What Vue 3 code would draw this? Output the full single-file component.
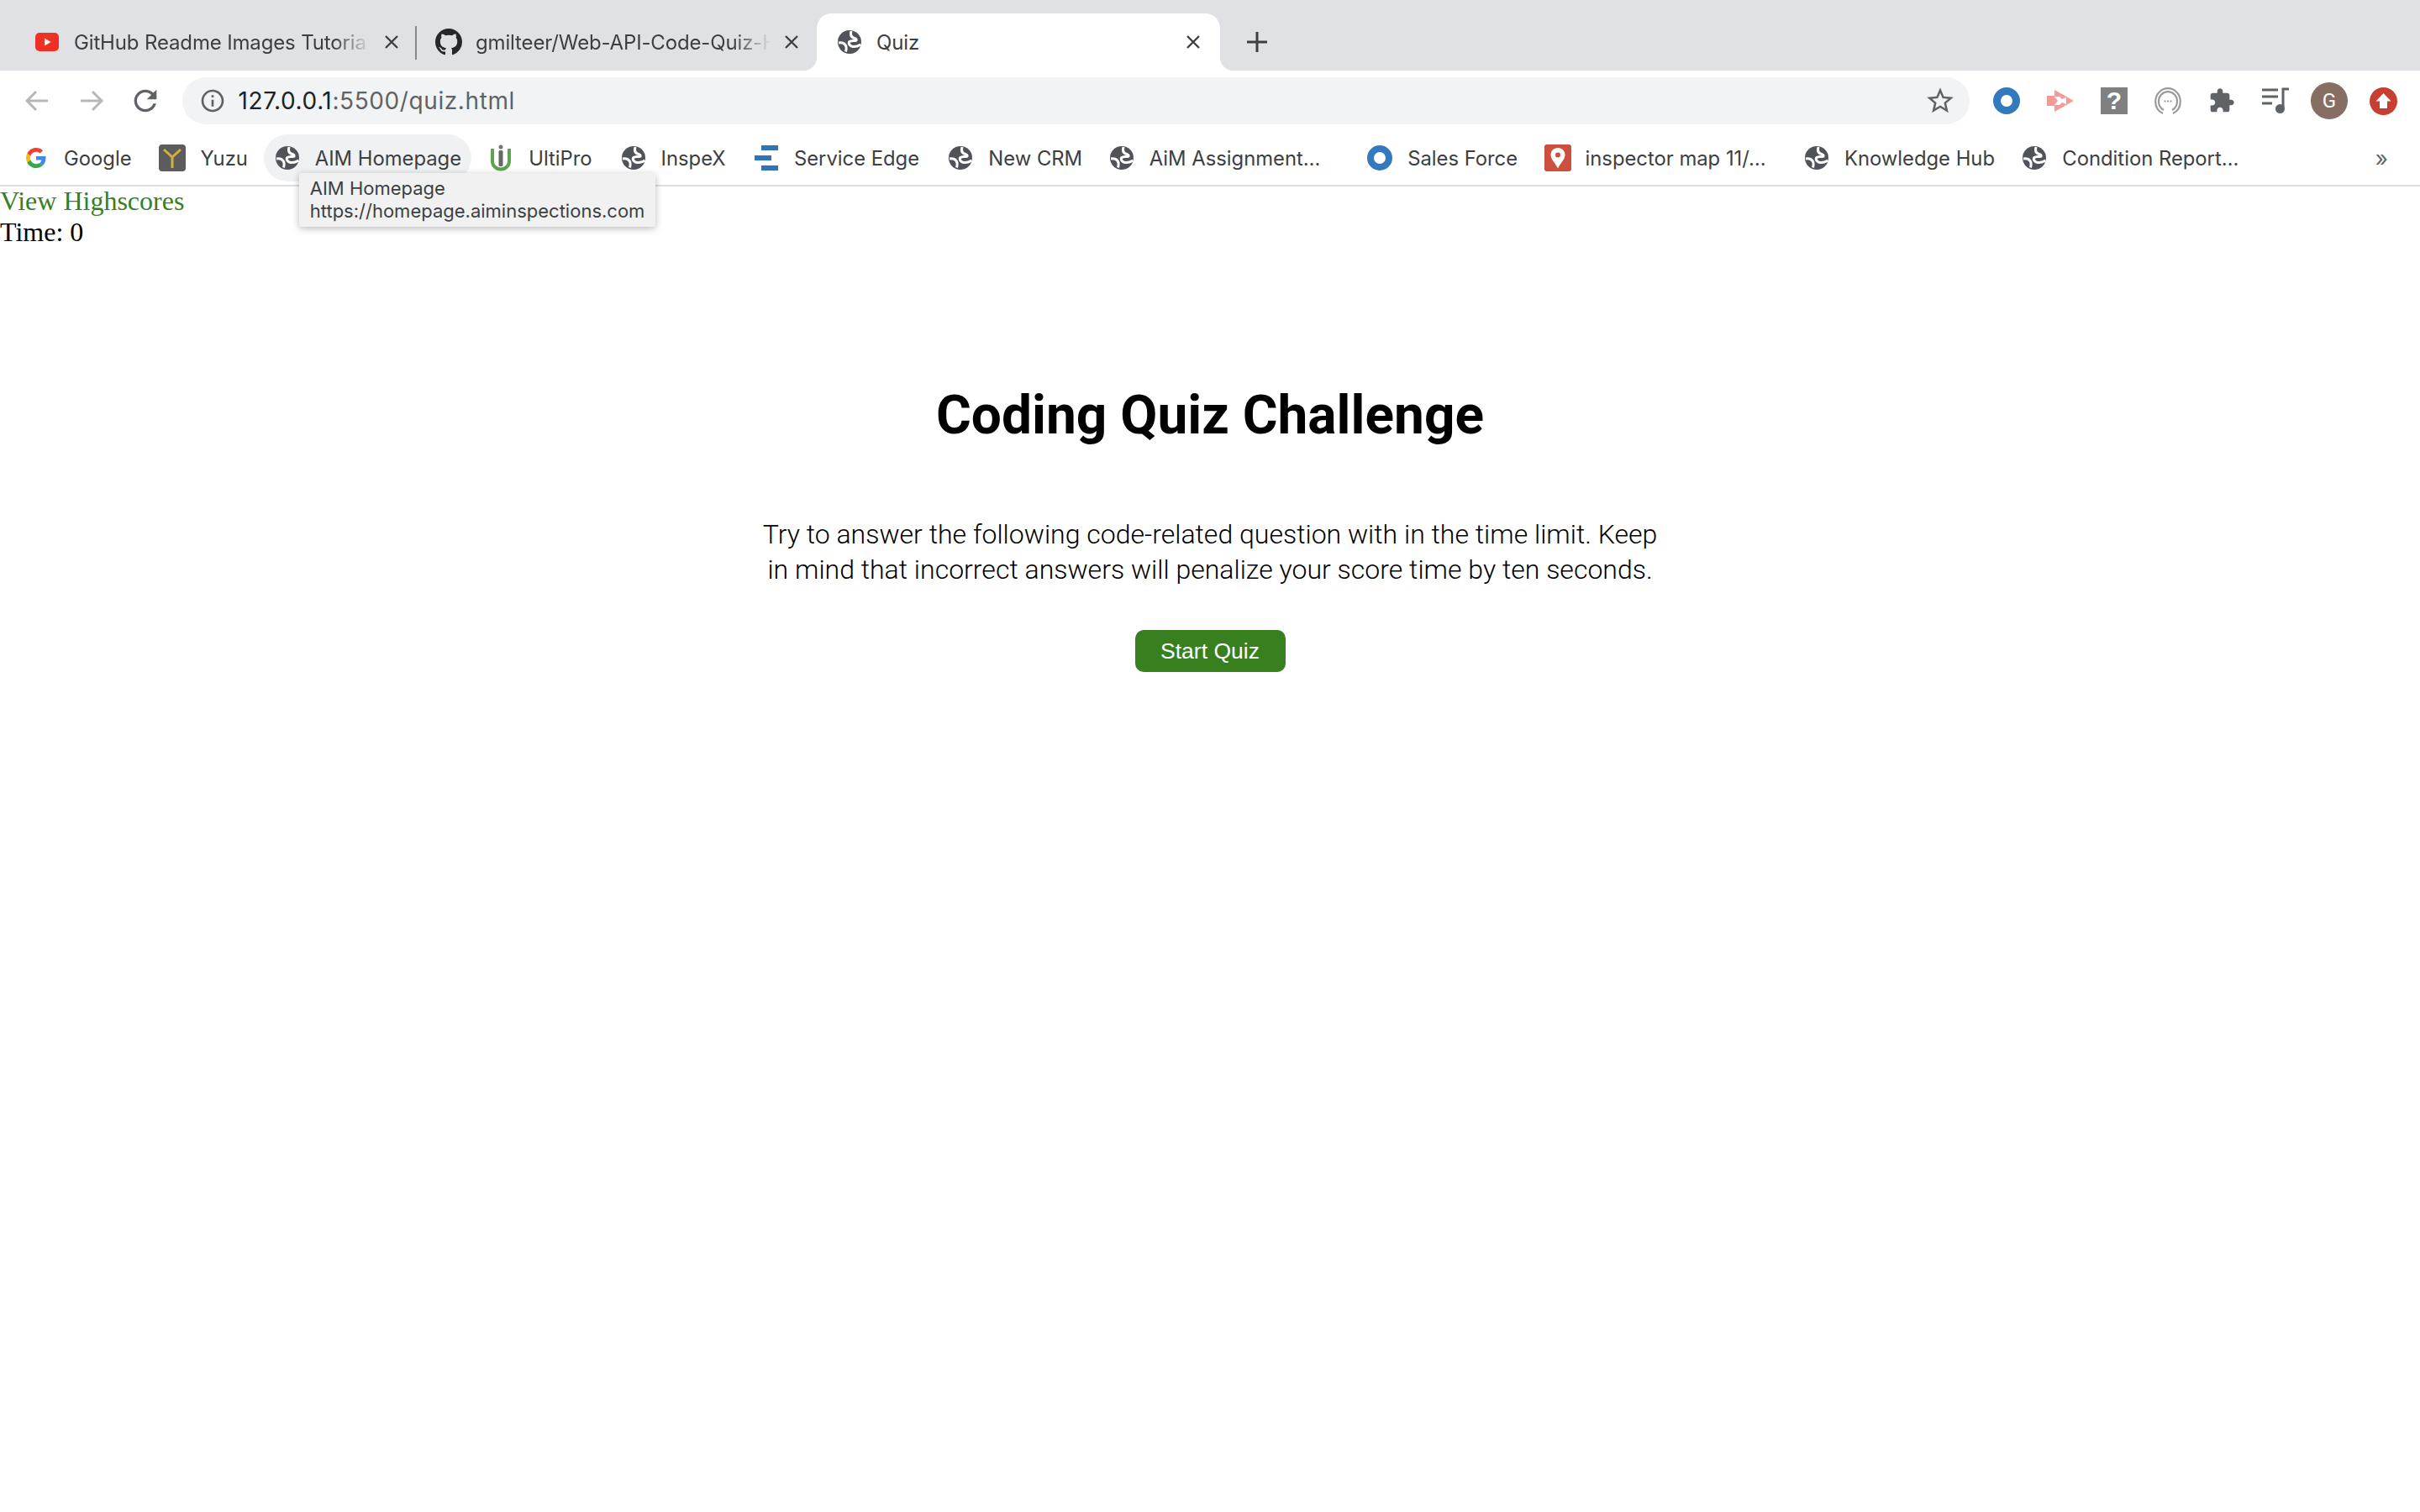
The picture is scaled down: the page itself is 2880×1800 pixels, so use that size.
<template>
  <div class="page">
    <svg class="defs" width="0" height="0">
      <symbol id="globe" viewBox="0 0 28 28">
        <circle cx="14" cy="14" r="14" fill="#50535a" />
        <path d="M16 1c-1 4-.5 7 2.500 8 2.500.8 4 1.500 3.500 3-2.500 1-7 0-8.500 2-1 2.500 1.500 5 4.500 5.500 3 .4 6-.5 9.500-2.500" fill="none" stroke="#fff" stroke-width="3" />
        <path d="M1 15c3.500-.5 6.500.5 8 2.500 1.300 1.700 1.500 4.500.5 8" fill="none" stroke="#fff" stroke-width="3" />
      </symbol>
    </svg>

    <header class="chrome">
      <div class="tabstrip">
        <div v-for="tab in tabs" :key="tab.title" class="tab" :class="[tab.icon, { active: tab.active }]">
          <svg v-if="tab.icon === 'youtube'" class="tab-icon" width="28" height="22" viewBox="0 0 28 22">
            <rect width="28" height="22" rx="5" fill="#ee3124" />
            <path d="M11 6.500l7.500 4.500-7.500 4.500z" fill="#fff" />
          </svg>
          <svg v-else-if="tab.icon === 'github'" class="tab-icon" width="32" height="32" viewBox="0 0 16 16">
            <path fill="#24272b" d="M8 0C3.58 0 0 3.58 0 8c0 3.54 2.290 6.530 5.470 7.590.4.070.55-.17.55-.38 0-.19-.01-.82-.01-1.490-2.010.37-2.530-.49-2.690-.94-.09-.23-.48-.94-.82-1.130-.28-.15-.68-.52-.01-.53.63-.01 1.080.58 1.230.82.72 1.210 1.870.87 2.330.66.07-.52.28-.87.51-1.070-1.780-.2-3.640-.89-3.640-3.950 0-.87.31-1.590.82-2.150-.08-.2-.36-1.020.08-2.120 0 0 .67-.21 2.200.82.64-.18 1.320-.27 2-.27.68 0 1.360.09 2 .27 1.530-1.040 2.200-.82 2.200-.82.44 1.100.16 1.920.08 2.120.51.56.82 1.270.82 2.150 0 3.070-1.870 3.750-3.650 3.950.29.25.54.73.54 1.480 0 1.070-.01 1.930-.01 2.200 0 .21.15.46.55.38A8.013 8.013 0 0016 8c0-4.420-3.580-8-8-8z" />
          </svg>
          <svg v-else class="tab-icon" width="28" height="28"><use href="#globe" /></svg>
          <span class="tab-title" :class="{ fade: !tab.active }">{{ tab.title }}</span>
          <svg class="tab-close" width="18" height="18" viewBox="0 0 18 18">
            <path d="M2 2l14 14M16 2L2 16" stroke="#3c4043" stroke-width="2.400" />
          </svg>
          <i v-if="tab.sep" class="tab-sep"></i>
        </div>
        <svg class="new-tab" width="24" height="24" viewBox="0 0 24 24">
          <path d="M12 0v24M0 12h24" stroke="#3c4043" stroke-width="3" />
        </svg>
      </div>

      <div class="toolbar">
        <div class="nav-btn">
          <svg width="28" height="26" viewBox="0 0 28 26"><path d="M27 13H3M13 2L2 13l11 11" fill="none" stroke="#b5b7ba" stroke-width="3" /></svg>
        </div>
        <div class="nav-btn">
          <svg width="28" height="26" viewBox="0 0 28 26"><path d="M1 13h24M15 2l11 11-11 11" fill="none" stroke="#b5b7ba" stroke-width="3" /></svg>
        </div>
        <div class="nav-btn">
          <svg width="40" height="40" viewBox="0 0 24 24"><path fill="#5f6368" d="M17.650 6.350C16.200 4.900 14.210 4 12 4c-4.420 0-7.990 3.580-7.990 8s3.570 8 7.990 8c3.730 0 6.840-2.550 7.730-6h-2.080c-.82 2.330-3.040 4-5.650 4-3.310 0-6-2.690-6-6s2.690-6 6-6c1.660 0 3.140.69 4.220 1.780L13 11h7V4l-2.350 2.350z" /></svg>
        </div>
        <div class="omnibox">
          <svg width="32" height="32" viewBox="0 0 24 24"><path fill="#5f6368" d="M11 7h2v2h-2zm0 4h2v6h-2zm1-9C6.480 2 2 6.480 2 12s4.480 10 10 10 10-4.480 10-10S17.520 2 12 2zm0 18c-4.410 0-8-3.590-8-8s3.590-8 8-8 8 3.590 8 8-3.590 8-8 8z" /></svg>
          <span class="url"><b>127.0.0.1</b>:5500/quiz.html</span>
          <svg class="star" width="38" height="38" viewBox="0 0 24 24"><path fill="#5f6368" d="M22 9.240l-7.190-.62L12 2 9.190 8.630 2 9.240l5.460 4.730L5.820 21 12 17.270 18.180 21l-1.630-7.030L22 9.240zM12 15.400l-3.760 2.270 1-4.280-3.320-2.880 4.380-.38L12 6.100l1.710 4.040 4.380.38-3.320 2.880 1 4.280L12 15.400z" /></svg>
        </div>
        <div class="extensions">
          <div class="ext"><svg width="32" height="32" viewBox="0 0 32 32"><circle cx="16" cy="16" r="11.500" fill="none" stroke="#3279bd" stroke-width="9" /></svg></div>
          <div class="ext">
            <svg width="32" height="32" viewBox="0 0 32 32">
              <path fill="#f59a9a" d="M0 10h9V3l23 13L9 29v-7H0z" />
              <path fill="#fff" d="M9 11h6l3 3 5-2v8l-5-2-3 3H9l4-5z" />
            </svg>
          </div>
          <div class="ext help">?</div>
          <div class="ext">
            <svg width="32" height="32" viewBox="0 0 32 32" fill="none" stroke="#9a9a9a" stroke-width="2.200">
              <path d="M10 31C4.500 28.500 1.200 22.800 1.200 16.500 1.200 8 8 1.200 16 1.200S30.800 8 30.800 16.500c0 6.300-3.300 12-8.800 14.500" />
              <path d="M11 27C7 25 5 21 5 16.500 5 10.300 10 5.200 16 5.200s11 5.100 11 11.300c0 4.500-2 8.500-6 10.500" />
              <path d="M11.500 16.500h2M15 16.500h2M18.500 16.500h2" stroke-width="1.800" />
            </svg>
          </div>
          <div class="ext">
            <svg width="32" height="32" viewBox="0 0 24 24"><path fill="#5f6368" d="M20.500 11H19V7c0-1.100-.9-2-2-2h-4V3.500C13 2.120 11.880 1 10.500 1S8 2.120 8 3.500V5H4c-1.100 0-1.990.9-1.990 2v3.800H3.500c1.490 0 2.700 1.210 2.700 2.700s-1.210 2.700-2.700 2.700H2V20c0 1.100.9 2 2 2h3.800v-1.500c0-1.490 1.210-2.700 2.700-2.700 1.490 0 2.700 1.210 2.700 2.700V22H17c1.100 0 2-.9 2-2v-4h1.500c1.380 0 2.500-1.120 2.500-2.500S21.880 11 20.500 11z" /></svg>
          </div>
          <div class="ext">
            <svg width="32" height="32" viewBox="0 0 32 32">
              <path d="M0 3h19M0 11h19M0 19h12" stroke="#5f6368" stroke-width="3" />
              <path d="M25 24V2h7" fill="none" stroke="#5f6368" stroke-width="3" />
              <circle cx="21.500" cy="25.500" r="5.500" fill="#5f6368" />
            </svg>
          </div>
          <div class="ext"><span class="avatar">G</span></div>
          <div class="ext">
            <svg width="33" height="33" viewBox="0 0 33 33">
              <circle cx="16.500" cy="16.500" r="16.500" fill="#c83f31" />
              <path d="M16.500 7l9 9.500H21V25H12v-8.500H7.500z" fill="#fff" />
            </svg>
          </div>
        </div>
      </div>

      <div class="bookmarks">
        <div v-for="b in bookmarks" :key="b.label" class="bookmark" :class="{ hover: b.hover }">
          <span class="bookmark-icon">
            <svg v-if="b.icon === 'google'" width="24" height="24" viewBox="0 0 48 48">
              <path fill="#EA4335" d="M24 9.500c3.540 0 6.710 1.220 9.210 3.600l6.850-6.850C35.900 2.380 30.470 0 24 0 14.620 0 6.510 5.380 2.560 13.220l7.980 6.190C12.430 13.720 17.740 9.500 24 9.500z" />
              <path fill="#4285F4" d="M46.980 24.550c0-1.570-.15-3.090-.38-4.550H24v9.020h12.940c-.58 2.960-2.260 5.480-4.780 7.180l7.730 6c4.510-4.180 7.090-10.360 7.090-17.650z" />
              <path fill="#FBBC05" d="M10.530 28.590c-.48-1.450-.76-2.990-.76-4.590s.27-3.140.76-4.590l-7.980-6.190C.92 16.460 0 20.120 0 24c0 3.880.92 7.540 2.560 10.780l7.970-6.190z" />
              <path fill="#34A853" d="M24 48c6.480 0 11.930-2.130 15.890-5.810l-7.730-6c-2.150 1.450-4.920 2.300-8.160 2.300-6.260 0-11.570-4.220-13.470-9.910l-7.980 6.190C6.510 42.620 14.620 48 24 48z" />
            </svg>
            <svg v-else-if="b.icon === 'yuzu'" width="32" height="32" viewBox="0 0 32 32">
              <rect width="32" height="32" rx="4" fill="#5c5c5c" />
              <path d="M6 6l10 9 10-9M16 14v14" fill="none" stroke="#d4b13f" stroke-width="3" />
            </svg>
            <svg v-else-if="b.icon === 'ulti'" width="24" height="32" viewBox="0 0 24 32">
              <path d="M2 5v15c0 5.500 4.500 9.500 10 9.500S22 25.500 22 20V5" fill="none" stroke="#5fa352" stroke-width="4" />
              <circle cx="12" cy="3" r="2.500" fill="#777" />
              <rect x="9.500" y="7" width="5" height="19" rx="1.500" fill="#666" />
            </svg>
            <svg v-else-if="b.icon === 'edge'" width="28" height="30" viewBox="0 0 28 30">
              <path d="M8 0h20v6H8zM0 12h20v6H0zM8 24h20v6H8z" fill="#3273b8" />
            </svg>
            <svg v-else-if="b.icon === 'ring'" width="30" height="32" viewBox="0 0 30 32">
              <circle cx="15" cy="16" r="11" fill="none" stroke="#3279bd" stroke-width="8" />
            </svg>
            <svg v-else-if="b.icon === 'map'" width="32" height="32" viewBox="0 0 32 32">
              <rect width="32" height="32" rx="3" fill="#cb5040" />
              <path fill-rule="evenodd" fill="#fff" d="M16 4c-5 0-8.500 3.800-8.500 8.500 0 5 5 9 8.500 16 3.500-7 8.500-11 8.500-16C24.500 7.800 21 4 16 4zm0 5.500a3 3 0 1 1 0 6 3 3 0 0 1 0-6z" />
            </svg>
            <svg v-else width="28" height="28"><use href="#globe" /></svg>
          </span>
          <span class="bookmark-label" :style="{ width: b.width + 'px' }">{{ b.label }}</span>
          <div v-if="b.hover" class="tooltip">
            <div>AIM Homepage</div>
            <div>https://homepage.aiminspections.com</div>
          </div>
        </div>
        <span class="more">»</span>
      </div>
    </header>

    <a class="scores" href="#">View Highscores</a>
    <div class="timer">Time: 0</div>

    <main class="intro">
      <h1>Coding Quiz Challenge</h1>
      <p>Try to answer the following code-related question with in the time limit. Keep in mind that incorrect answers will penalize your score time by ten seconds.</p>
      <button class="start">Start Quiz</button>
    </main>
  </div>
</template>

<script setup>
const tabs = [
  { title: 'GitHub Readme Images Tutoria', icon: 'youtube', sep: true },
  { title: 'gmilteer/Web-API-Code-Quiz-H', icon: 'github' },
  { title: 'Quiz', icon: 'globe', active: true },
]

// label widths keep the bar's spacing, elided ones sit in a wider slot
const bookmarks = [
  { label: 'Google', icon: 'google', width: 80 },
  { label: 'Yuzu', icon: 'yuzu', width: 54 },
  { label: 'AIM Homepage', icon: 'globe', width: 172, hover: true },
  { label: 'UltiPro', icon: 'ulti', width: 75 },
  { label: 'InspeX', icon: 'globe', width: 76 },
  { label: 'Service Edge', icon: 'edge', width: 149 },
  { label: 'New CRM', icon: 'globe', width: 109 },
  { label: 'AiM Assignment…', icon: 'globe', width: 225 },
  { label: 'Sales Force', icon: 'ring', width: 129 },
  { label: 'inspector map 11/…', icon: 'map', width: 226 },
  { label: 'Knowledge Hub', icon: 'globe', width: 177 },
  { label: 'Condition Report…', icon: 'globe', width: 210 },
]
</script>

<style>
html,
body {
  background: #fff;
}
</style>

<style scoped>
.page {
  min-height: 1800px;
  background: #fff;
  font-family: "Liberation Serif", serif;
  font-size: 32px;
  color: #000;
}

.defs {
  position: absolute;
}

.chrome {
  font-family: Inter, "Liberation Sans", sans-serif;
  border-bottom: 2px solid #dcdde1;
}

.tabstrip {
  height: 84px;
  padding: 16px 0 0 16px;
  box-sizing: border-box;
  background: #dfe1e5;
  display: flex;
  align-items: stretch;
}

.tab {
  position: relative;
  width: 480px;
  display: flex;
  align-items: center;
  padding: 0 21px 0 26px;
  box-sizing: border-box;
  font-size: 24px;
  letter-spacing: -0.15px;
  color: #3c4043;
}

.tab.github {
  width: 476px;
  padding-left: 22px;
}

.tab.active {
  padding: 0 23px 0 25px;
  background: #fff;
  border-radius: 18px 18px 0 0;
}

.tab.active::before,
.tab.active::after {
  content: "";
  position: absolute;
  bottom: 0;
  width: 16px;
  height: 16px;
}

.tab.active::before {
  left: -16px;
  background: radial-gradient(circle at 0 0, transparent 16px, #fff 16.5px);
}

.tab.active::after {
  right: -16px;
  background: radial-gradient(circle at 100% 0, transparent 16px, #fff 16.5px);
}

.tab-icon {
  flex: none;
  margin-right: 18px;
}

.tab.github .tab-icon {
  margin-right: 16px;
}

.tab-title {
  flex: 1;
  overflow: hidden;
  white-space: nowrap;
}

.tab-title.fade {
  -webkit-mask-image: linear-gradient(to right, #000 calc(100% - 50px), transparent calc(100% - 6px));
  mask-image: linear-gradient(to right, #000 calc(100% - 50px), transparent calc(100% - 6px));
}

.tab.github .tab-title.fade {
  -webkit-mask-image: linear-gradient(to right, #000 calc(100% - 60px), transparent calc(100% - 16px));
  mask-image: linear-gradient(to right, #000 calc(100% - 60px), transparent calc(100% - 16px));
}

.tab-close {
  flex: none;
  margin-left: 10px;
}

.tab.github .tab-close {
  margin-left: 0;
}

.tab-sep {
  position: absolute;
  right: 0;
  top: 15px;
  width: 2px;
  height: 40px;
  background: #85878b;
}

.new-tab {
  align-self: center;
  margin-left: 32px;
}

.toolbar {
  height: 72px;
  display: flex;
  align-items: center;
  padding: 0 12px;
  background: #fff;
}

.nav-btn {
  width: 64.5px;
  display: flex;
  justify-content: center;
}

.nav-btn svg,
.ext svg {
  display: block;
}

.omnibox {
  flex: 1;
  height: 56px;
  margin: 0 12px 0 11px;
  padding: 0 16px 0 20px;
  border-radius: 28px;
  background: #f1f3f4;
  display: flex;
  align-items: center;
}

.url {
  margin-left: 15px;
  font-size: 28px;
  letter-spacing: 0.6px;
  color: #5f6368;
}

.url b {
  font-weight: 400;
  color: #202124;
}

.star {
  margin-left: auto;
}

.extensions {
  display: flex;
}

.ext {
  width: 64px;
  height: 44px;
  display: flex;
  align-items: center;
  justify-content: center;
}

.help {
  width: 32px;
  height: 32px;
  margin: 6px 16px;
  background: #808080;
  color: #fff;
  font: 700 30px "Liberation Sans", sans-serif;
}

.avatar {
  width: 44px;
  height: 44px;
  border-radius: 50%;
  background: #866e63;
  color: #fff;
  font: 400 24px Roboto, sans-serif;
  display: flex;
  align-items: center;
  justify-content: center;
}

.bookmarks {
  height: 64px;
  padding-left: 15px;
  display: flex;
  align-items: center;
  gap: 7.4px;
  background: #fff;
}

.bookmark {
  position: relative;
  height: 56px;
  padding: 0 14px;
  border-radius: 28px;
  display: flex;
  align-items: center;
  gap: 19px;
  font-size: 23.8px;
  color: #3c4043;
  white-space: nowrap;
}

.bookmark.hover {
  background: #f0f1f2;
}

.bookmark-icon {
  flex: none;
  width: 28px;
  display: flex;
  justify-content: center;
}

.bookmark-icon svg {
  flex: none;
  display: block;
}

.bookmark-label {
  flex: none;
}

.tooltip {
  position: absolute;
  left: 42px;
  top: 46px;
  z-index: 2;
  padding: 5px 13px;
  background: #f1f1f1;
  border-radius: 2px;
  box-shadow: 0 2px 8px rgba(0, 0, 0, 0.28);
  font-size: 22px;
  line-height: 27px;
  color: #3c4043;
}

.more {
  margin-left: auto;
  margin-right: 38px;
  font-size: 26px;
  color: #5f6368;
}

.scores {
  display: block;
  margin-top: -1px;
  color: #38801f;
  text-decoration: none;
}

.intro {
  display: flex;
  flex-direction: column;
  align-items: center;
  margin-top: 162px;
}

h1 {
  margin: 0;
  font: 700 64px Roboto, sans-serif;
}

p {
  width: 1080px;
  margin: 83px 0 0;
  font: 300 32px/42px Roboto, sans-serif;
  text-align: center;
}

.start {
  width: 179px;
  height: 50px;
  margin-top: 51px;
  padding: 0;
  border: 0;
  border-radius: 10px;
  background: #38801f;
  color: #fff;
  font: 400 26.5px "Liberation Sans", sans-serif;
}
</style>
